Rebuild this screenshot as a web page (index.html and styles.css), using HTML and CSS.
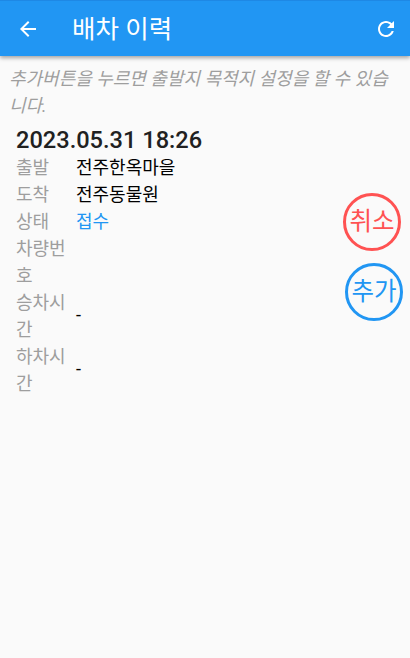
FILE: index.html
```html
<!DOCTYPE html>
<html lang="ko">
<head>
<meta charset="utf-8">
<title>배차 이력</title>
<link rel="stylesheet" href="styles.css">
</head>
<body>
<header class="appbar">
  <svg class="icon" viewBox="0 0 24 24"><path d="M20 11H7.83l5.59-5.59L12 4l-8 8 8 8 1.41-1.41L7.83 13H20v-2z"/></svg>
  <h1 class="title">배차 이력</h1>
  <svg class="icon" viewBox="0 0 24 24"><path d="M17.65 6.35C16.2 4.9 14.21 4 12 4c-4.42 0-7.99 3.58-7.99 8s3.57 8 7.99 8c3.73 0 6.84-2.55 7.73-6h-2.08c-.82 2.33-3.04 4-5.65 4-3.31 0-6-2.69-6-6s2.69-6 6-6c1.66 0 3.14.69 4.22 1.78L13 11h7V4l-2.35 2.35z"/></svg>
</header>
<main class="content">
  <p class="hint">추가버튼을 누르면 출발지 목적지 설정을 할 수 있습니다.</p>
  <section class="record">
    <div class="date">2023.05.31 18:26</div>
    <dl class="rows">
      <dt>출발</dt><dd>전주한옥마을</dd>
      <dt>도착</dt><dd>전주동물원</dd>
      <dt>상태</dt><dd class="status">접수</dd>
      <dt>차량번호</dt><dd></dd>
      <dt>승차시간</dt><dd class="dash">-</dd>
      <dt>하차시간</dt><dd class="dash">-</dd>
    </dl>
  </section>
  <button class="round cancel">취소</button>
  <button class="round add">추가</button>
</main>
</body>
</html>
```
FILE: styles.css
```css
* { box-sizing: border-box; }
html, body { margin: 0; height: 100%; }
body {
  background: #fafafa;
  font-family: Roboto, "Noto Sans CJK KR", sans-serif;
  overflow: hidden;
}
.appbar {
  height: 56px;
  background: #2196f3;
  border-top: 1px solid #1e88e5;
  display: flex;
  align-items: center;
  padding: 0 12px 0 16px;
  box-shadow: 0 2px 4px rgba(0,0,0,.35);
  color: #fff;
}
.icon { width: 24px; height: 24px; fill: #fff; flex: none; }
.title {
  flex: 1;
  margin: 0 0 0 32px;
  font-size: 25.5px;
  font-weight: 400;
  line-height: 32px;
}
.content { position: relative; height: 602px; }
.hint {
  margin: 0;
  padding: 9px 9px 0;
  font-size: 18px;
  line-height: 27px;
  font-style: italic;
  color: #9e9e9e;
}
.record { padding: 8px 16px 0; }
.date {
  font-size: 23.6px;
  font-weight: 500;
  line-height: 27px;
  color: #212121;
}
.rows {
  margin: 0;
  display: grid;
  grid-template-columns: 60px 1fr;
  font-size: 18px;
  line-height: 27px;
}
.rows dt { color: #9e9e9e; padding-right: 8px; }
.rows dd { margin: 0; color: #000; align-self: center; }
.rows dd.status { color: #2196f3; }
.rows dd.dash { margin-bottom: 4px; }
.round {
  position: absolute;
  width: 58px;
  height: 58px;
  padding: 0;
  border-radius: 50%;
  background: transparent;
  border: 3.5px solid;
  font: 400 24.5px/1 Roboto, "Noto Sans CJK KR", sans-serif;
}
.cancel { left: 343px; top: 137px; color: #ff5252; border-color: #ff5252; }
.add { left: 345px; top: 207px; color: #2196f3; border-color: #2196f3; }
```
